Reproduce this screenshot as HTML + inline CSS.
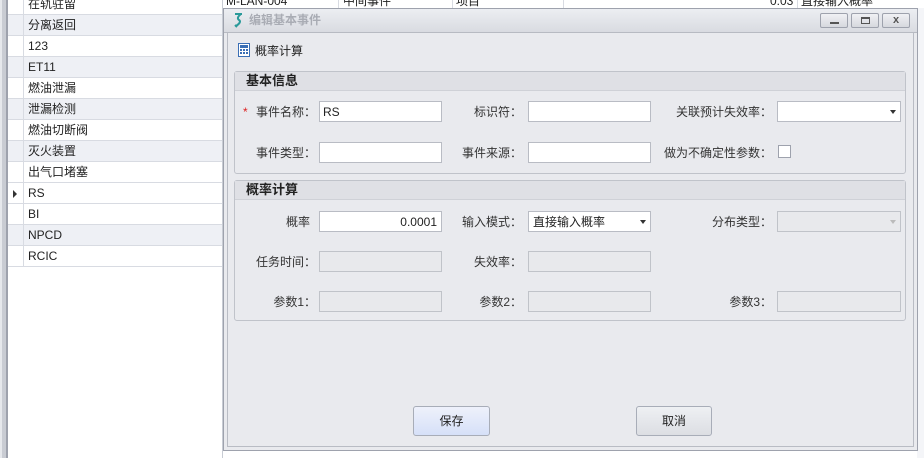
<!DOCTYPE html><html><head><meta charset="utf-8"><style>
*{margin:0;padding:0;box-sizing:border-box}
body{width:924px;height:458px;overflow:hidden;background:#fff;font-family:"Liberation Sans","Noto Sans CJK SC",sans-serif;font-size:12px;line-height:14px;color:#222;position:relative}
.a{position:absolute}
.row{position:absolute;left:8px;width:214px;height:21px;border-bottom:1px solid #d8dbe2}
.row span{position:absolute;left:20px;top:3px}
.lbl{position:absolute;text-align:right;white-space:nowrap;color:#333}
.in{position:absolute;height:21px;background:#fff;border:1px solid #b9bcc4;line-height:14px}
.dis{background:#e8e9ec;border-color:#c0c3c9}
.btn{position:absolute;height:30px;border:1px solid #a8adb8;border-radius:3px;text-align:center;line-height:28px}
</style></head><body>
<div class="a" style="left:0;top:0;width:2px;height:458px;background:#e6e8ec"></div>
<div class="a" style="left:2px;top:0;width:4px;height:458px;background:#c9ccd3"></div>
<div class="a" style="left:6px;top:0;width:2px;height:458px;background:#9ea2ad"></div>
<div class="row" style="top:-6px;background:#fff"><span>在轨驻留</span></div>
<div class="row" style="top:15px;background:#eef0f5"><span>分离返回</span></div>
<div class="row" style="top:36px;background:#fff"><span>123</span></div>
<div class="row" style="top:57px;background:#eef0f5"><span>ET11</span></div>
<div class="row" style="top:78px;background:#fff"><span>燃油泄漏</span></div>
<div class="row" style="top:99px;background:#eef0f5"><span>泄漏检测</span></div>
<div class="row" style="top:120px;background:#fff"><span>燃油切断阀</span></div>
<div class="row" style="top:141px;background:#eef0f5"><span>灭火装置</span></div>
<div class="row" style="top:162px;background:#fff"><span>出气口堵塞</span></div>
<div class="row" style="top:183px;background:#fff"><span>RS</span></div>
<div class="row" style="top:204px;background:#fff"><span>BI</span></div>
<div class="row" style="top:225px;background:#eef0f5"><span>NPCD</span></div>
<div class="row" style="top:246px;background:#fff"><span>RCIC</span></div>
<div class="a" style="left:13px;top:190px;width:0;height:0;border-left:4px solid #333;border-top:4px solid transparent;border-bottom:4px solid transparent"></div>
<div class="a" style="left:8px;top:0;width:16px;height:267px;border-right:1px solid #d8dbe2"></div>
<div class="a" style="left:222px;top:0;width:1px;height:458px;background:#c8ccd4"></div>
<div class="a" style="left:226px;top:-6px">M-LAN-004</div>
<div class="a" style="left:338px;top:0;width:1px;height:8px;background:#d8dbe2"></div>
<div class="a" style="left:343px;top:-6px">中间事件</div>
<div class="a" style="left:452px;top:0;width:1px;height:8px;background:#d8dbe2"></div>
<div class="a" style="left:456px;top:-6px">项目</div>
<div class="a" style="left:563px;top:0;width:1px;height:8px;background:#d8dbe2"></div>
<div class="a" style="left:770px;top:-6px">0.03</div>
<div class="a" style="left:797px;top:0;width:1px;height:8px;background:#d8dbe2"></div>
<div class="a" style="left:801px;top:-6px">直接输入概率</div>
<div class="a" style="left:917px;top:8px;width:7px;height:450px;background:#f4f5f8"></div>
<div class="a" style="left:223px;top:8px;width:695px;height:443px;background:#e9eaee;border:1px solid #9ea2ad"></div>
<div class="a" style="left:224px;top:9px;width:693px;height:24px;background:linear-gradient(#eceef2,#d9dbe1);border-bottom:1px solid #b7bac2"></div>
<div class="a" style="left:227px;top:33px;width:687px;height:414px;border:1px solid #b9bcc4;border-top:none"></div>
<svg class="a" style="left:231px;top:12px" width="14" height="16"><path d="M4 2 L11 2 M10 2 Q5 6 8 8 Q11 10 5 14 M4 13 L6 15" fill="none" stroke="#2a9a9a" stroke-width="2"/></svg>
<div class="a" style="left:249px;top:13px;color:#a9acb4;font-weight:bold;font-size:12px">编辑基本事件</div>
<div class="a" style="left:820px;top:13px;width:28px;height:15px;border:1px solid #9ea2ad;border-radius:2px;background:linear-gradient(#f0f1f4,#d6d8de)"><div class="a" style="left:9px;top:8px;width:9px;height:2px;background:#555"></div></div>
<div class="a" style="left:851px;top:13px;width:28px;height:15px;border:1px solid #9ea2ad;border-radius:2px;background:linear-gradient(#f0f1f4,#d6d8de)"><div class="a" style="left:9px;top:3px;width:9px;height:7px;border:1px solid #555;border-top-width:2px"></div></div>
<div class="a" style="left:882px;top:13px;width:28px;height:15px;border:1px solid #9ea2ad;border-radius:2px;background:linear-gradient(#f0f1f4,#d6d8de);text-align:center;font-size:11px;font-weight:bold;color:#555;line-height:13px">x</div>
<svg class="a" style="left:238px;top:43px" width="12" height="14"><rect x="0.5" y="0.5" width="11" height="13" fill="#fff" stroke="#3b6fb5"/><rect x="2" y="2" width="8" height="3" fill="#3b6fb5"/><g fill="#3b6fb5"><rect x="2" y="6" width="2" height="2"/><rect x="5" y="6" width="2" height="2"/><rect x="8" y="6" width="2" height="2"/><rect x="2" y="9" width="2" height="2"/><rect x="5" y="9" width="2" height="2"/><rect x="8" y="9" width="2" height="2"/></g></svg>
<div class="a" style="left:255px;top:44px">概率计算</div>
<div class="a" style="left:234px;top:71px;width:672px;height:103px;border:1px solid #c0c3ca;border-radius:3px"></div>
<div class="a" style="left:235px;top:72px;width:670px;height:19px;background:#dfe0e5;border-bottom:1px solid #cfd1d7"></div>
<div class="a" style="left:246px;top:74px;font-weight:bold;font-size:13px">基本信息</div>
<div class="lbl" style="left:243px;top:105px;color:#d22">*</div>
<div class="lbl" style="left:250px;top:105px;width:66px">事件名称：</div>
<div class="in" style="left:319px;top:101px;width:123px;padding:3px 3px">RS</div>
<div class="lbl" style="left:450px;top:105px;width:72px">标识符：</div>
<div class="in" style="left:528px;top:101px;width:123px"></div>
<div class="lbl" style="left:660px;top:105px;width:112px">关联预计失效率：</div>
<div class="in" style="left:777px;top:101px;width:124px"><div class="a" style="right:4px;top:8px;border-top:4px solid #333;border-left:3px solid transparent;border-right:3px solid transparent"></div></div>
<div class="lbl" style="left:240px;top:146px;width:76px">事件类型：</div>
<div class="in" style="left:319px;top:142px;width:123px"></div>
<div class="lbl" style="left:450px;top:146px;width:72px">事件来源：</div>
<div class="in" style="left:528px;top:142px;width:123px"></div>
<div class="lbl" style="left:660px;top:146px;width:112px">做为不确定性参数：</div>
<div class="a" style="left:778px;top:145px;width:13px;height:13px;border:1px solid #9ea2ad;background:#fff"></div>
<div class="a" style="left:234px;top:180px;width:672px;height:141px;border:1px solid #c0c3ca;border-radius:3px"></div>
<div class="a" style="left:235px;top:181px;width:670px;height:19px;background:#dfe0e5;border-bottom:1px solid #cfd1d7"></div>
<div class="a" style="left:246px;top:183px;font-weight:bold;font-size:13px">概率计算</div>
<div class="lbl" style="left:240px;top:215px;width:70px">概率</div>
<div class="in" style="left:319px;top:211px;width:123px;text-align:right;padding:3px 4px">0.0001</div>
<div class="lbl" style="left:450px;top:215px;width:72px">输入模式：</div>
<div class="in" style="left:528px;top:211px;width:123px;padding:3px 4px">直接输入概率<div class="a" style="right:4px;top:8px;border-top:4px solid #333;border-left:3px solid transparent;border-right:3px solid transparent"></div></div>
<div class="lbl" style="left:660px;top:215px;width:112px">分布类型：</div>
<div class="in dis" style="left:777px;top:211px;width:124px"><div class="a" style="right:4px;top:8px;border-top:4px solid #bbb;border-left:3px solid transparent;border-right:3px solid transparent"></div></div>
<div class="lbl" style="left:240px;top:255px;width:76px">任务时间：</div>
<div class="in dis" style="left:319px;top:251px;width:123px"></div>
<div class="lbl" style="left:450px;top:255px;width:72px">失效率：</div>
<div class="in dis" style="left:528px;top:251px;width:123px"></div>
<div class="lbl" style="left:240px;top:295px;width:76px">参数1：</div>
<div class="in dis" style="left:319px;top:291px;width:123px"></div>
<div class="lbl" style="left:450px;top:295px;width:72px">参数2：</div>
<div class="in dis" style="left:528px;top:291px;width:123px"></div>
<div class="lbl" style="left:660px;top:295px;width:112px">参数3：</div>
<div class="in dis" style="left:777px;top:291px;width:124px"></div>
<div class="btn" style="left:413px;top:406px;width:77px;background:linear-gradient(#eef1fb,#d6e0f8)">保存</div>
<div class="btn" style="left:636px;top:406px;width:76px;background:linear-gradient(#eef0f3,#dcdee3)">取消</div>
</body></html>
